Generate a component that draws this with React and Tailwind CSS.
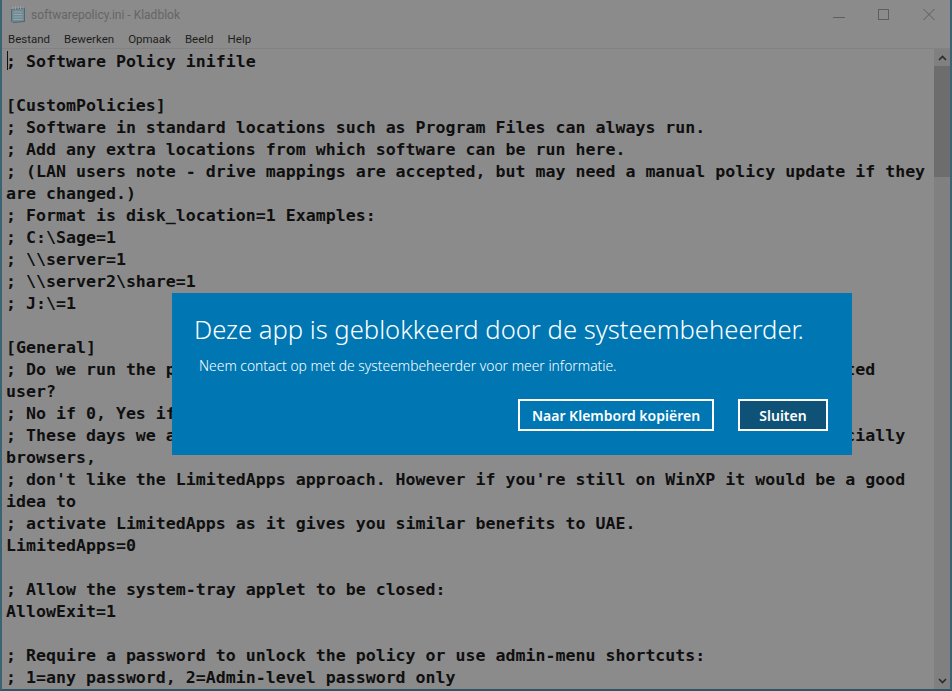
import React from 'react';

const lines = [
  '; Software Policy inifile',
  '',
  '[CustomPolicies]',
  '; Software in standard locations such as Program Files can always run.',
  '; Add any extra locations from which software can be run here.',
  '; (LAN users note - drive mappings are accepted, but may need a manual policy update if they',
  'are changed.)',
  '; Format is disk_location=1 Examples:',
  '; C:\\Sage=1',
  '; \\\\server=1',
  '; \\\\server2\\share=1',
  '; J:\\=1',
  '',
  '[General]',
  '; Do we run the policy for all users, or only when the current user is a non-restricted',
  'user?',
  '; No if 0, Yes if 1',
  '; These days we almost always advise this is off, since many applications, and, especially',
  'browsers,',
  "; don't like the LimitedApps approach. However if you're still on WinXP it would be a good",
  'idea to',
  '; activate LimitedApps as it gives you similar benefits to UAE.',
  'LimitedApps=0',
  '',
  '; Allow the system-tray applet to be closed:',
  'AllowExit=1',
  '',
  '; Require a password to unlock the policy or use admin-menu shortcuts:',
  '; 1=any password, 2=Admin-level password only',
];

const NotepadIcon = () => (
  <svg width="16" height="18" viewBox="0 0 16 18" className="shrink-0">
    <path d="M1.5 3.5 L14.5 2 V15.5 L3 16.5 L1.5 15 Z" fill="#6f8a94" stroke="#53656d" />
    <path d="M3.5 6 H12.5 M3.5 8.5 H12.5 M3.5 11 H12.5 M3.5 13.5 H12.5" stroke="#93a5ab" />
    <path d="M3 0.5 V3.5 M5.5 0.5 V3.5 M8 0.5 V3 M10.5 0.5 V3 M13 0.5 V2.5" stroke="#a4a4a4" />
  </svg>
);

export default function App() {
  return (
    <div className="relative h-[691px] w-[952px] overflow-hidden bg-[#8b8b8b] font-['Roboto',sans-serif]">
      <div className="flex h-full flex-col border-x-2 border-b-2 border-x-[#3b6472] border-b-[#2f5566]">
        {/* titlebar */}
        <div className="flex h-[30px] items-center pl-[8px] text-[12px] text-[#666666]">
          <NotepadIcon />
          <span className="ml-[5px]">softwarepolicy.ini - Kladblok</span>
          <div className="ml-auto flex items-center gap-[29px] pr-[13px]">
            <svg width="16" height="16" viewBox="0 0 16 16"><path d="M2 10.5 H14" stroke="#5e5e5e" /></svg>
            <svg width="16" height="16" viewBox="0 0 16 16"><rect x="2.5" y="2.5" width="10" height="10" fill="none" stroke="#5e5e5e" /></svg>
            <svg width="16" height="16" viewBox="0 0 16 16"><path d="M2.5 2 L13.5 13 M13.5 2 L2.5 13" stroke="#5e5e5e" /></svg>
          </div>
        </div>
        {/* menu */}
        <div className="flex h-[19px] items-center gap-[14px] border-b border-[#828282] pl-[6px] pt-[2px] text-[11.5px] text-[#1e1e1e]">
          <span>Bestand</span>
          <span>Bewerken</span>
          <span>Opmaak</span>
          <span>Beeld</span>
          <span>Help</span>
        </div>
        {/* editor */}
        <div className="flex min-h-0 flex-1">
          <div className="relative min-w-0 flex-1 overflow-hidden pl-[4px] pt-[2px] font-['DejaVu_Sans_Mono',monospace] text-[16.6px] font-bold leading-[22px] text-[#0f0f0f]">
            <div className="absolute left-[5px] top-[2px] h-[19px] w-px bg-[#111111]" />
            {lines.map((line, i) => (
              <div key={i} className="h-[22px] whitespace-pre">{line}</div>
            ))}
          </div>
          <div className="flex w-[16px] flex-col bg-[#808080]">
            <div className="flex h-[17px] items-center justify-center">
              <svg width="9" height="6" viewBox="0 0 9 6"><path d="M1 5 L4.5 1.5 L8 5" fill="none" stroke="#2b2b2b" strokeWidth="1.6" /></svg>
            </div>
            <div className="h-[111px] bg-[#6d6d6d]" />
            <div className="flex-1" />
            <div className="flex h-[17px] items-center justify-center">
              <svg width="9" height="6" viewBox="0 0 9 6"><path d="M1 1 L4.5 4.5 L8 1" fill="none" stroke="#2b2b2b" strokeWidth="1.6" /></svg>
            </div>
          </div>
        </div>
      </div>

      {/* blocked dialog */}
      <div className="absolute left-[172px] top-[293px] flex h-[162px] w-[680px] flex-col bg-[#0077b3] pl-[22px] pr-[24px] font-['Noto_Sans',sans-serif] text-white">
        <div className="mt-[19px] whitespace-nowrap text-[25.6px] font-light leading-[36px]">
          Deze app is geblokkeerd door de systeembeheerder.
        </div>
        <div className="ml-[5px] mt-[8px] whitespace-nowrap text-[13.85px] font-light leading-[20px]">
          Neem contact op met de systeembeheerder voor meer informatie.
        </div>
        <div className="mt-[23px] flex justify-end gap-[24px]">
          <button className="h-[32px] w-[196px] border-2 border-white text-[14px] font-semibold">
            Naar Klembord kopiëren
          </button>
          <button className="h-[32px] w-[90px] border-2 border-white bg-[#0f5278] text-[14px] font-semibold">
            Sluiten
          </button>
        </div>
      </div>
    </div>
  );
}
